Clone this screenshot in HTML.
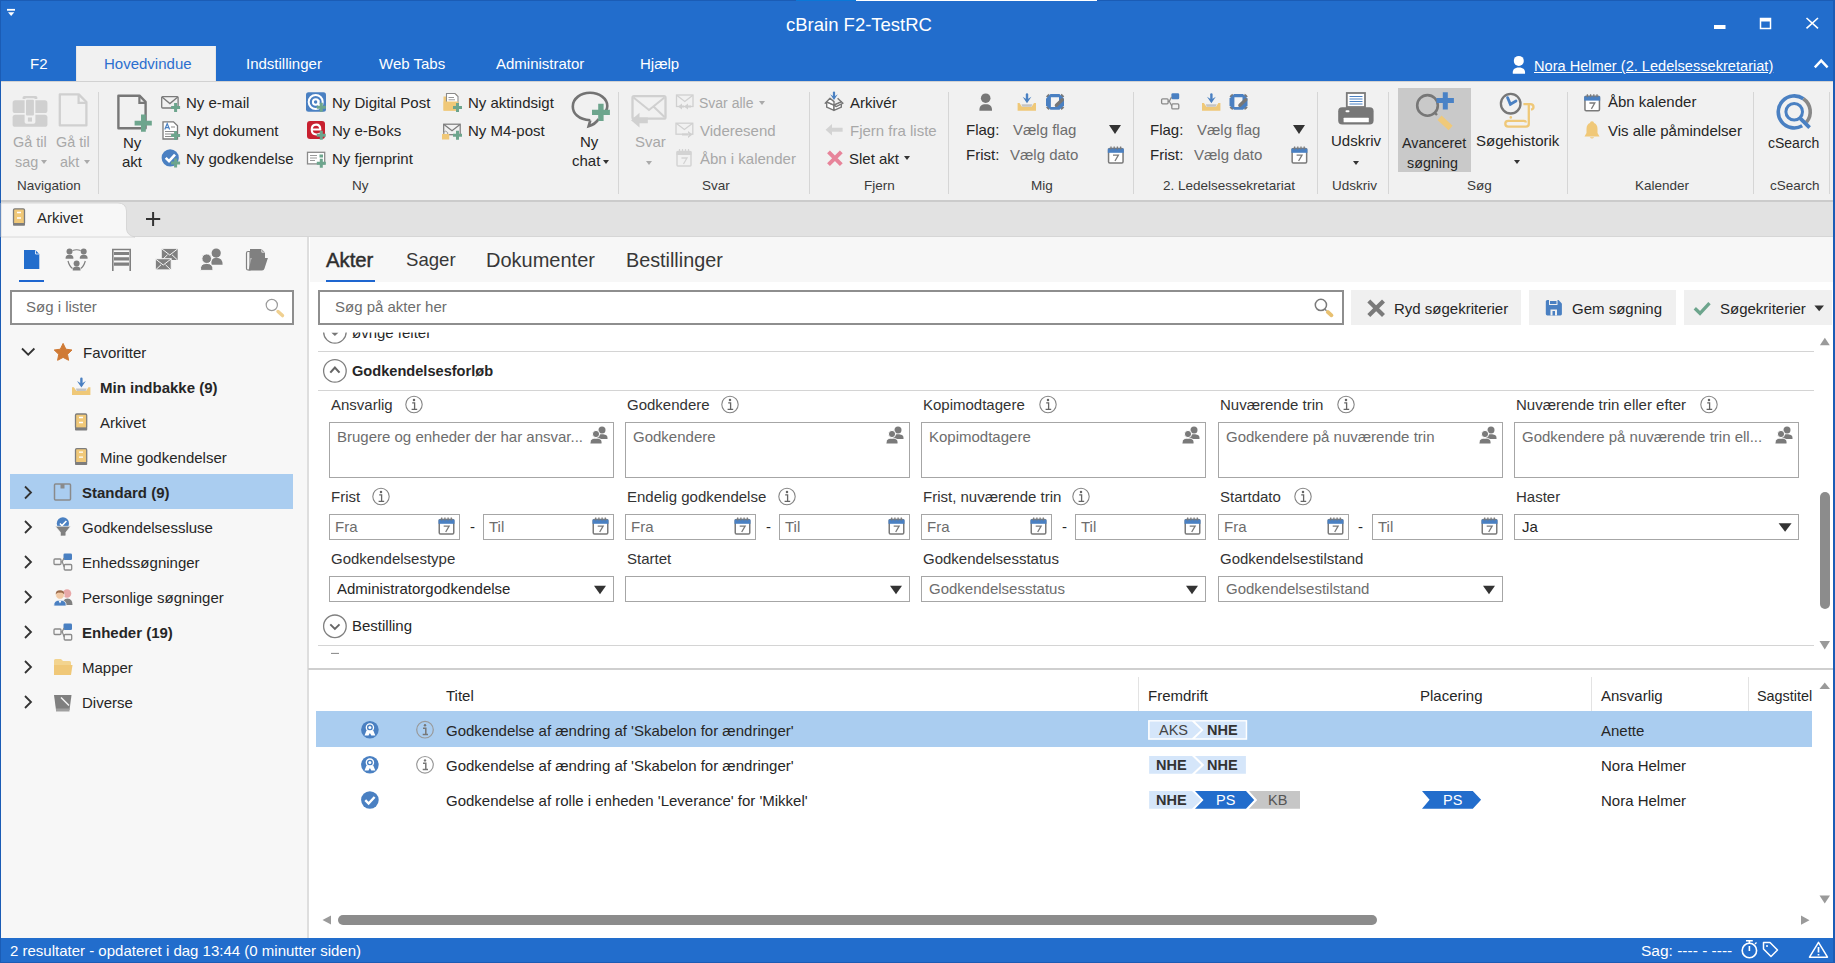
<!DOCTYPE html>
<html><head><meta charset="utf-8">
<style>
*{box-sizing:border-box;margin:0;padding:0}
html,body{width:1835px;height:963px;overflow:hidden;background:#fff}
body{position:relative;font-family:"Liberation Sans",sans-serif;font-size:15px;color:#262626}
.a{position:absolute}
.t{position:absolute;white-space:nowrap;line-height:18px}
.s{font-size:13.5px;line-height:16px;color:#3a3a3a}
svg{position:absolute;overflow:visible}
.w{color:#fff}
.sep{position:absolute;width:1px;background:#d6d6d6;top:92px;height:102px}
.dis{color:#a8a8a8}
.g{color:#6d6d6d}
.box{position:absolute;border:1px solid #a6a6a6;background:#fff}
.lab{position:absolute;white-space:nowrap;line-height:18px;color:#333}
.tri{position:absolute;width:0;height:0;border-left:6px solid transparent;border-right:6px solid transparent;border-top:8px solid #333}
.btri{position:absolute;width:0;height:0;border-left:3.5px solid transparent;border-right:3.5px solid transparent;border-top:4px solid #555}
.row{position:absolute;white-space:nowrap;line-height:18px}
.b{font-weight:bold}
</style></head><body>
<!-- BASE AREAS -->
<div class="a" style="left:0;top:0;width:1835px;height:81px;background:#226dcc"></div>
<div class="a" style="left:0;top:81px;width:1835px;height:119px;background:#f1f1f1;border-top:1px solid #d2d2d2"></div>
<div class="a" style="left:0;top:200px;width:1835px;height:37px;background:#e2e2e2;border-top:2px solid #cbcbcb;border-bottom:1px solid #d6d6d6"></div>
<div class="a" style="left:0;top:237px;width:309px;height:701px;background:#f7f7f7;border-right:2px solid #dedede"></div>
<div class="a" style="left:310px;top:237px;width:1525px;height:45px;background:#f7f7f7"></div>
<div class="a" style="left:0;top:938px;width:1835px;height:25px;background:#226dcc"></div>
<div class="a" style="left:0;top:0;width:1px;height:963px;background:#1b5cb5"></div>
<div class="a" style="left:1833px;top:0;width:2px;height:963px;background:#1b5cb5"></div>
<div class="a" style="left:0;top:962px;width:1835px;height:1px;background:#1b5cb5"></div>
<div class="a" style="left:0;top:0;width:1835px;height:1px;background:#1b5cb5"></div>

<!-- TITLE BAR -->
<div class="t w" style="left:786px;top:14px;font-size:18.5px;line-height:22px">cBrain F2-TestRC</div>
<div class="a" style="left:796px;top:0;width:60px;height:1px;background:#0a78d7"></div>
<div class="a" style="left:856px;top:0;width:241px;height:1px;background:#fff"></div>

<!-- RIBBON TABS -->
<div class="a" style="left:76px;top:46px;width:140px;height:35px;background:#f1f1f1;border-left:1px solid #e6e6e6;border-right:1px solid #e6e6e6"></div>
<div class="t w" style="left:30px;top:55px">F2</div>
<div class="t" style="left:104px;top:55px;color:#2b6fcf">Hovedvindue</div>
<div class="t w" style="left:246px;top:55px">Indstillinger</div>
<div class="t w" style="left:379px;top:55px">Web Tabs</div>
<div class="t w" style="left:496px;top:55px">Administrator</div>
<div class="t w" style="left:640px;top:55px">Hjælp</div>
<div class="t w" style="left:1534px;top:57px;font-size:14.6px;text-decoration:underline">Nora Helmer (2. Ledelsessekretariat)</div>

<!-- RIBBON CONTENT -->
<div class="sep" style="left:98px"></div>
<div class="sep" style="left:618px"></div>
<div class="sep" style="left:809px"></div>
<div class="sep" style="left:948px"></div>
<div class="sep" style="left:1133px"></div>
<div class="sep" style="left:1317px"></div>
<div class="sep" style="left:1388px"></div>
<div class="sep" style="left:1567px"></div>
<div class="sep" style="left:1753px"></div>
<div class="sep" style="left:1829px"></div>

<div class="t s" style="left:17px;top:178px">Navigation</div>
<div class="t s" style="left:352px;top:178px">Ny</div>
<div class="t s" style="left:702px;top:178px">Svar</div>
<div class="t s" style="left:864px;top:178px">Fjern</div>
<div class="t s" style="left:1031px;top:178px">Mig</div>
<div class="t s" style="left:1163px;top:178px">2. Ledelsessekretariat</div>
<div class="t s" style="left:1332px;top:178px">Udskriv</div>
<div class="t s" style="left:1467px;top:178px">Søg</div>
<div class="t s" style="left:1635px;top:178px">Kalender</div>
<div class="t s" style="left:1770px;top:178px">cSearch</div>

<!-- Navigation group -->
<div class="t dis" style="left:13px;top:133px;font-size:14.4px">Gå til</div>
<div class="t dis" style="left:15px;top:153px;font-size:14.4px">sag</div>
<div class="btri" style="left:41px;top:160px;border-top-color:#aaa"></div>
<div class="t dis" style="left:56px;top:133px;font-size:14.4px">Gå til</div>
<div class="t dis" style="left:60px;top:153px;font-size:14.4px">akt</div>
<div class="btri" style="left:84px;top:160px;border-top-color:#aaa"></div>

<!-- Ny group -->
<div class="t" style="left:123px;top:134px">Ny</div>
<div class="t" style="left:122px;top:153px">akt</div>
<div class="t" style="left:186px;top:94px">Ny e-mail</div>
<div class="t" style="left:186px;top:122px">Nyt dokument</div>
<div class="t" style="left:186px;top:150px">Ny godkendelse</div>
<div class="t" style="left:332px;top:94px">Ny Digital Post</div>
<div class="t" style="left:332px;top:122px">Ny e-Boks</div>
<div class="t" style="left:332px;top:150px">Ny fjernprint</div>
<div class="t" style="left:468px;top:94px">Ny aktindsigt</div>
<div class="t" style="left:468px;top:122px">Ny M4-post</div>
<div class="t" style="left:580px;top:133px">Ny</div>
<div class="t" style="left:572px;top:152px">chat</div>
<div class="btri" style="left:603px;top:160px;border-top-color:#333"></div>

<!-- Svar group -->
<div class="t dis" style="left:635px;top:133px">Svar</div>
<div class="btri" style="left:646px;top:161px;border-top-color:#aaa"></div>
<div class="t dis" style="left:699px;top:94px;font-size:14px">Svar alle</div>
<div class="btri" style="left:759px;top:101px;border-top-color:#aaa"></div>
<div class="t dis" style="left:700px;top:122px">Videresend</div>
<div class="t dis" style="left:700px;top:150px">Åbn i kalender</div>

<!-- Fjern group -->
<div class="t" style="left:850px;top:94px">Arkivér</div>
<div class="t dis" style="left:850px;top:122px">Fjern fra liste</div>
<div class="t" style="left:849px;top:150px">Slet akt</div>
<div class="btri" style="left:904px;top:156px;border-top-color:#333"></div>

<!-- Mig group -->
<div class="t" style="left:966px;top:121px">Flag:</div>
<div class="t g" style="left:1013px;top:121px">Vælg flag</div>
<div class="tri" style="left:1109px;top:125px;border-left-width:6px;border-right-width:6px;border-top-width:9px"></div>
<div class="t" style="left:966px;top:146px">Frist:</div>
<div class="t g" style="left:1010px;top:146px">Vælg dato</div>

<div class="t" style="left:1150px;top:121px">Flag:</div>
<div class="t g" style="left:1197px;top:121px">Vælg flag</div>
<div class="tri" style="left:1293px;top:125px;border-top-width:9px"></div>
<div class="t" style="left:1150px;top:146px">Frist:</div>
<div class="t g" style="left:1194px;top:146px">Vælg dato</div>

<!-- Udskriv -->
<div class="t" style="left:1331px;top:132px">Udskriv</div>
<div class="btri" style="left:1353px;top:161px;border-top-color:#333"></div>

<!-- Søg -->
<div class="a" style="left:1398px;top:88px;width:73px;height:84px;background:#c9c9c9"></div>
<div class="t" style="left:1402px;top:134px;font-size:14.3px">Avanceret</div>
<div class="t" style="left:1407px;top:154px;font-size:14.3px">søgning</div>
<div class="t" style="left:1476px;top:132px">Søgehistorik</div>
<div class="btri" style="left:1514px;top:160px;border-top-color:#333"></div>

<!-- Kalender -->
<div class="t" style="left:1608px;top:93px">Åbn kalender</div>
<div class="t" style="left:1608px;top:122px">Vis alle påmindelser</div>

<!-- cSearch -->
<div class="t" style="left:1768px;top:134px;font-size:14px">cSearch</div>

<!-- TAB STRIP -->
<svg width="140" height="40" style="left:0;top:200px"><path d="M1 37V3H118Q126 3 126.5 11V29Q127 35.5 135 37Z" fill="#f7f7f7" stroke="#d0d0d0" stroke-width="0.8"/></svg>
<div class="t" style="left:37px;top:209px">Arkivet</div>

<!-- LEFT PANEL -->
<div class="a" style="left:19px;top:280px;width:25px;height:2px;background:#1e66d0"></div>
<div class="box" style="left:10px;top:290px;width:284px;height:35px;border:2px solid #8e8e8e"></div>
<div class="t g" style="left:26px;top:298px">Søg i lister</div>
<div class="t" style="left:83px;top:344px">Favoritter</div>
<div class="t b" style="left:100px;top:379px">Min indbakke (9)</div>
<div class="t" style="left:100px;top:414px">Arkivet</div>
<div class="t" style="left:100px;top:449px">Mine godkendelser</div>
<div class="a" style="left:10px;top:474px;width:283px;height:35px;background:#aacdf0"></div>
<div class="t b" style="left:82px;top:484px">Standard (9)</div>
<div class="t" style="left:82px;top:519px">Godkendelsessluse</div>
<div class="t" style="left:82px;top:554px">Enhedssøgninger</div>
<div class="t" style="left:82px;top:589px">Personlige søgninger</div>
<div class="t b" style="left:82px;top:624px">Enheder (19)</div>
<div class="t" style="left:82px;top:659px">Mapper</div>
<div class="t" style="left:82px;top:694px">Diverse</div>

<!-- MAIN TABS -->
<div class="t" style="left:326px;top:248px;font-size:20.3px;line-height:24px;color:#2e2e2e;-webkit-text-stroke:0.45px #2e2e2e">Akter</div>
<div class="t" style="left:406px;top:248px;font-size:18.6px;line-height:24px;color:#383838">Sager</div>
<div class="t" style="left:486px;top:248px;font-size:20px;line-height:24px;color:#383838">Dokumenter</div>
<div class="t" style="left:626px;top:248px;font-size:19.8px;line-height:24px;color:#383838">Bestillinger</div>
<div class="a" style="left:326px;top:280px;width:49px;height:2px;background:#1e66d0"></div>

<!-- SEARCH ROW -->
<div class="box" style="left:318px;top:290px;width:1026px;height:35px;border:2px solid #8e8e8e"></div>
<div class="t g" style="left:335px;top:298px">Søg på akter her</div>
<div class="a" style="left:1351px;top:290px;width:170px;height:35px;background:#f0f0f0"></div>
<div class="t" style="left:1394px;top:300px">Ryd søgekriterier</div>
<div class="a" style="left:1529px;top:290px;width:147px;height:35px;background:#f0f0f0"></div>
<div class="t" style="left:1572px;top:300px">Gem søgning</div>
<div class="a" style="left:1684px;top:290px;width:148px;height:35px;background:#f0f0f0"></div>
<div class="t" style="left:1720px;top:300px">Søgekriterier</div>


<!-- FORM AREA -->
<div class="a" style="left:318px;top:325px;width:1496px;height:1px;background:#fff"></div>
<div class="a" style="left:318px;top:351px;width:1496px;height:1px;background:#d4d4d4"></div>
<div class="a" style="left:318px;top:390px;width:1496px;height:1px;background:#d4d4d4"></div>
<div class="t b" style="left:352px;top:362px;font-size:14.6px">Godkendelsesforløb</div>

<div class="lab" style="left:331px;top:396px">Ansvarlig</div>
<div class="lab" style="left:627px;top:396px">Godkendere</div>
<div class="lab" style="left:923px;top:396px">Kopimodtagere</div>
<div class="lab" style="left:1220px;top:396px">Nuværende trin</div>
<div class="lab" style="left:1516px;top:396px">Nuværende trin eller efter</div>

<div class="box" style="left:329px;top:422px;width:285px;height:56px"></div>
<div class="box" style="left:625px;top:422px;width:285px;height:56px"></div>
<div class="box" style="left:921px;top:422px;width:285px;height:56px"></div>
<div class="box" style="left:1218px;top:422px;width:285px;height:56px"></div>
<div class="box" style="left:1514px;top:422px;width:285px;height:56px"></div>
<div class="t g" style="left:337px;top:428px">Brugere og enheder der har ansvar...</div>
<div class="t g" style="left:633px;top:428px">Godkendere</div>
<div class="t g" style="left:929px;top:428px">Kopimodtagere</div>
<div class="t g" style="left:1226px;top:428px">Godkendere på nuværende trin</div>
<div class="t g" style="left:1522px;top:428px">Godkendere på nuværende trin ell...</div>

<div class="lab" style="left:331px;top:488px">Frist</div>
<div class="lab" style="left:627px;top:488px">Endelig godkendelse</div>
<div class="lab" style="left:923px;top:488px">Frist, nuværende trin</div>
<div class="lab" style="left:1220px;top:488px">Startdato</div>
<div class="lab" style="left:1516px;top:488px">Haster</div>

<div class="box" style="left:329px;top:514px;width:131px;height:26px"></div>
<div class="box" style="left:483px;top:514px;width:131px;height:26px"></div>
<div class="box" style="left:625px;top:514px;width:131px;height:26px"></div>
<div class="box" style="left:779px;top:514px;width:131px;height:26px"></div>
<div class="box" style="left:921px;top:514px;width:131px;height:26px"></div>
<div class="box" style="left:1075px;top:514px;width:131px;height:26px"></div>
<div class="box" style="left:1218px;top:514px;width:131px;height:26px"></div>
<div class="box" style="left:1372px;top:514px;width:131px;height:26px"></div>
<div class="box" style="left:1514px;top:514px;width:285px;height:26px"></div>
<div class="t g" style="left:335px;top:518px">Fra</div>
<div class="t g" style="left:489px;top:518px">Til</div>
<div class="t g" style="left:631px;top:518px">Fra</div>
<div class="t g" style="left:785px;top:518px">Til</div>
<div class="t g" style="left:927px;top:518px">Fra</div>
<div class="t g" style="left:1081px;top:518px">Til</div>
<div class="t g" style="left:1224px;top:518px">Fra</div>
<div class="t g" style="left:1378px;top:518px">Til</div>
<div class="t" style="left:1522px;top:518px">Ja</div>
<div class="t" style="left:470px;top:518px">-</div>
<div class="t" style="left:766px;top:518px">-</div>
<div class="t" style="left:1062px;top:518px">-</div>
<div class="t" style="left:1358px;top:518px">-</div>

<div class="lab" style="left:331px;top:550px">Godkendelsestype</div>
<div class="lab" style="left:627px;top:550px">Startet</div>
<div class="lab" style="left:923px;top:550px">Godkendelsesstatus</div>
<div class="lab" style="left:1220px;top:550px">Godkendelsestilstand</div>
<div class="box" style="left:329px;top:576px;width:285px;height:26px"></div>
<div class="box" style="left:625px;top:576px;width:285px;height:26px"></div>
<div class="box" style="left:921px;top:576px;width:285px;height:26px"></div>
<div class="box" style="left:1218px;top:576px;width:285px;height:26px"></div>
<div class="t" style="left:337px;top:580px">Administratorgodkendelse</div>
<div class="t g" style="left:929px;top:580px">Godkendelsesstatus</div>
<div class="t g" style="left:1226px;top:580px">Godkendelsestilstand</div>

<div class="t" style="left:352px;top:617px">Bestilling</div>
<div class="a" style="left:318px;top:645px;width:1496px;height:1px;background:#d4d4d4"></div>
<div class="a" style="left:308px;top:668px;width:1525px;height:2px;background:#cfcfcf"></div>

<!-- LIST AREA -->
<div class="t" style="left:446px;top:687px">Titel</div>
<div class="t" style="left:1148px;top:687px">Fremdrift</div>
<div class="t" style="left:1420px;top:687px">Placering</div>
<div class="t" style="left:1601px;top:687px">Ansvarlig</div>
<div class="t" style="left:1757px;top:687px;width:55px;overflow:hidden;font-size:14.4px">Sagstitel</div>
<div class="a" style="left:1138px;top:677px;width:1px;height:34px;background:#e3e3e3"></div>
<div class="a" style="left:1591px;top:677px;width:1px;height:34px;background:#e3e3e3"></div>
<div class="a" style="left:1748px;top:677px;width:1px;height:34px;background:#e3e3e3"></div>

<div class="a" style="left:316px;top:711px;width:1496px;height:36px;background:#aacdf0"></div>
<div class="t" style="left:446px;top:722px">Godkendelse af ændring af 'Skabelon for ændringer'</div>
<div class="t" style="left:446px;top:757px">Godkendelse af ændring af 'Skabelon for ændringer'</div>
<div class="t" style="left:446px;top:792px">Godkendelse af rolle i enheden 'Leverance' for 'Mikkel'</div>
<div class="t" style="left:1601px;top:722px">Anette</div>
<div class="t" style="left:1601px;top:757px">Nora Helmer</div>
<div class="t" style="left:1601px;top:792px">Nora Helmer</div>

<!-- scrollbars -->
<div class="a" style="left:1820px;top:492px;width:10px;height:117px;background:#8c8c8c;border-radius:5px"></div>
<div class="a" style="left:338px;top:915px;width:1039px;height:10px;background:#8c8c8c;border-radius:5px"></div>


<!-- STATUS -->
<div class="t w" style="left:10px;top:942px">2 resultater - opdateret i dag 13:44 (0 minutter siden)</div>
<div class="t w" style="left:1641px;top:942px;font-size:15.5px">Sag: ---- - ----</div>


<!-- ICONS OVERLAY -->
<svg width="1835" height="963" style="left:0;top:0;pointer-events:none">
<defs>
 <symbol id="pl" overflow="visible"><path d="M-4.5 0H4.5M0 -4.5V4.5" stroke="#6da58d" stroke-width="3"/></symbol>
 <symbol id="cal" overflow="visible">
  <rect x="0.75" y="2.5" width="14.5" height="14.5" rx="1.2" fill="#fff" stroke="#7a7a7a" stroke-width="1.5"/>
  <rect x="0" y="2.6" width="16" height="4.2" fill="#4a80c2"/>
  <path d="M3.2 0.5V3.5M6.4 0.5V3.5M9.6 0.5V3.5M12.8 0.5V3.5" stroke="#7a7a7a" stroke-width="1.3"/>
  <path d="M5.2 9.2H10.6L7.2 15" stroke="#7a7a7a" stroke-width="1.3" fill="none"/>
 </symbol>
 <symbol id="info" overflow="visible">
  <circle cx="0" cy="0" r="8.2" fill="none" stroke="#858585" stroke-width="1.1"/>
  <circle cx="0" cy="-4.4" r="1.25" fill="#666"/>
  <path d="M-1.8 -1.6H0.6V4.7M-2.4 4.9H3.2" stroke="#666" stroke-width="1.3" fill="none"/>
 </symbol>
 <symbol id="ppl" overflow="visible">
  <circle cx="12" cy="4" r="3.5" fill="#7a7a7a"/>
  <path d="M6.5 13C6.5 9 9 8.3 12 8.3S17.5 9 17.5 12V13Z" fill="#7a7a7a"/>
  <circle cx="6" cy="8" r="3.6" fill="#7a7a7a" stroke="#fff" stroke-width="1"/>
  <path d="M0 17.5C0 13 2.5 12.2 6 12.2S12 13 12 16.5V18H0Z" fill="#7a7a7a" stroke="#fff" stroke-width="1"/>
 </symbol>
</defs>

<!-- title bar -->
<path d="M7 9.8H15" stroke="#fff" stroke-width="1.8"/>
<path d="M8 12.2H14.3L11.15 15.9Z" fill="#fff"/>
<rect x="1714" y="25" width="11.5" height="4" fill="#fff"/>
<rect x="1760.5" y="18.5" width="10" height="10" fill="none" stroke="#fff" stroke-width="1.5"/>
<rect x="1760" y="18" width="11" height="3.5" fill="#fff"/>
<path d="M1806.5 18L1818 28.3M1818 18L1806.5 28.3" stroke="#fff" stroke-width="1.6"/>
<path d="M1814.8 67.3L1821.2 60.6L1827.6 67.3" stroke="#fff" stroke-width="2.4" fill="none"/>
<circle cx="1518.8" cy="60.9" r="5" fill="#fff"/>
<path d="M1512.8 73.7C1512.3 69.5 1514.5 67.4 1518.9 67.4S1525.5 69.5 1525 73.7Z" fill="#fff"/>

<!-- Navigation -->
<path d="M22.6 99V97.5Q22.6 96 24.2 96H35.8Q37.3 96 37.3 97.5V99Z" fill="#d0d0d0"/>
<rect x="12.6" y="100.3" width="34.8" height="12.8" rx="2.6" fill="#d0d0d0"/>
<rect x="12.6" y="114.7" width="34.8" height="12.1" rx="2.6" fill="#d0d0d0"/>
<rect x="24.6" y="98.3" width="10.8" height="25.4" rx="1.8" fill="#f1f1f1"/>
<rect x="26" y="99.8" width="7.9" height="15.8" rx="1" fill="#d0d0d0"/>
<rect x="27.9" y="117.5" width="4.1" height="4.1" fill="#d0d0d0"/>
<path d="M59.8 94.4H78.8L86.4 102V125.4H59.8Z" fill="none" stroke="#d0d0d0" stroke-width="2.3" stroke-linejoin="round"/>
<path d="M78.6 94.4V102.8H86.4" fill="none" stroke="#d0d0d0" stroke-width="2.2"/>

<!-- Ny akt -->
<path d="M118.4 95.7H139.5L145.6 101.8V128.2H118.4Z" fill="none" stroke="#777" stroke-width="2.4" stroke-linejoin="round"/>
<path d="M139.4 95.7V102.9H145.6" fill="none" stroke="#777" stroke-width="2.2"/>
<path d="M134.6 123.2H151.8M143.4 114.6V131.8" stroke="#6da58d" stroke-width="4.8"/>

<!-- Ny e-mail -->
<rect x="161.7" y="96.6" width="16.4" height="11.4" rx="1" fill="none" stroke="#7a7a7a" stroke-width="1.3"/>
<path d="M162 97L169.9 103.6L177.8 97" fill="none" stroke="#7a7a7a" stroke-width="1.3"/>
<use href="#pl" x="175.6" y="107.6"/>
<!-- Nyt dokument -->
<path d="M163 121.8H173.5L177.5 125.8V139H163Z" fill="#fff" stroke="#7a7a7a" stroke-width="1.3"/>
<path d="M164.8 129.5L167.2 123.5L169.6 129.5M165.7 127.6H168.7" stroke="#4a80c2" stroke-width="1.2" fill="none"/>
<path d="M171 127H175M165 131.5H175M165 134H175M165 136.5H172" stroke="#8a8a8a" stroke-width="1.2"/>
<use href="#pl" x="175.6" y="135.4"/>
<!-- Ny godkendelse -->
<circle cx="170.2" cy="157.9" r="8.6" fill="#4a80c2"/>
<path d="M165.7 157.9L169 161.2L175 154.6" stroke="#fff" stroke-width="2.6" fill="none"/>
<use href="#pl" x="175.6" y="163"/>

<!-- Ny Digital Post -->
<rect x="306" y="92.2" width="20" height="19.5" rx="2.5" fill="#4a80c2"/>
<circle cx="315.7" cy="102" r="7" fill="none" stroke="#fff" stroke-width="2"/>
<circle cx="315.7" cy="102" r="2.8" fill="none" stroke="#fff" stroke-width="2"/>
<path d="M318.5 100V104Q318.5 106 321 105" fill="none" stroke="#fff" stroke-width="2"/>
<use href="#pl" x="321.3" y="107.3"/>
<!-- e-Boks -->
<rect x="307" y="121" width="18" height="18" rx="3" fill="#c8202f"/>
<path d="M312 129.5H320.3Q320.3 124.6 316.1 124.6Q311.7 124.6 311.7 129.6Q311.7 134.5 316.3 134.5Q318.7 134.5 320 133.4" fill="none" stroke="#fff" stroke-width="2.1"/>
<use href="#pl" x="321.3" y="135.2"/>
<!-- fjernprint -->
<rect x="307.5" y="152.3" width="17.2" height="11.6" fill="#fff" stroke="#8a8a8a" stroke-width="1.3"/>
<path d="M310 155.5H317M310 158H317M310 160.5H315" stroke="#9a9a9a" stroke-width="1.2"/>
<rect x="319.5" y="154.5" width="3.5" height="3" fill="#6da58d"/>
<use href="#pl" x="321.3" y="163.3"/>
<!-- aktindsigt -->
<path d="M443.5 96.5H448V94H457V110.5H443.5Z" fill="#f0c878"/>
<path d="M446.5 93.5H455L458 96.5V106H446.5Z" fill="#fff" stroke="#8a8a8a" stroke-width="1.1"/>
<path d="M448.5 97.5H454M448.5 99.8H455" stroke="#999" stroke-width="1"/>
<path d="M443.5 101.5H458.5V110.7H443.5Z" fill="#f0c878"/>
<use href="#pl" x="457.5" y="107.5"/>
<!-- M4 -->
<rect x="443.7" y="124.2" width="16.5" height="10.5" fill="none" stroke="#7a7a7a" stroke-width="1.2"/>
<path d="M444 124.5L452 130.8L460 124.5" fill="none" stroke="#7a7a7a" stroke-width="1.2"/>
<rect x="442" y="134" width="7.2" height="5.5" fill="#f0c878"/>
<path d="M443.5 134V132.5Q445.6 129.8 447.7 132.5V134" fill="none" stroke="#9a9a9a" stroke-width="1"/>
<use href="#pl" x="457.5" y="135.3"/>
<!-- Ny chat -->
<path d="M590.3 120.3C578 119.5 572.8 113 572.8 106.4C572.8 98.5 580.8 92.8 590 92.8C599.5 92.8 607.3 98.5 607.3 106C607.3 108 606.8 109.5 606 110.8M590.3 120.3L588.6 126.3C593 125 596.5 122.5 598.6 119" fill="none" stroke="#737373" stroke-width="2.6"/>
<path d="M592 112.4H609.9M600.9 103.7V121" stroke="#6da58d" stroke-width="5.4"/>

<!-- Svar -->
<rect x="632.5" y="96.2" width="33" height="22.5" rx="1.5" fill="none" stroke="#d0d0d0" stroke-width="2.3"/>
<path d="M633.5 97.5L649 110L664.5 97.5M654 107L664.5 117" fill="none" stroke="#d0d0d0" stroke-width="2"/>
<path d="M631 120.3L639.5 112.8V117.5H647.8V123.2H639.5V127.5Z" fill="#d0d0d0"/>
<!-- Svar alle -->
<rect x="676.5" y="95" width="16.5" height="11.5" fill="none" stroke="#d0d0d0" stroke-width="1.3"/>
<path d="M677 95.5L684.8 101.5L692.5 95.5" fill="none" stroke="#d0d0d0" stroke-width="1.3"/>
<path d="M678 106.5L682 103.5V109.5ZM684 106.5L688 103.5V109.5Z" fill="#d0d0d0"/>
<path d="M681 106.5H684M687 106.5H691" stroke="#d0d0d0" stroke-width="2"/>
<!-- Videresend -->
<rect x="676" y="123.2" width="16.8" height="11" fill="none" stroke="#d0d0d0" stroke-width="1.3"/>
<path d="M676.5 123.6L684.4 129.5L692.3 123.6" fill="none" stroke="#d0d0d0" stroke-width="1.3"/>
<path d="M692.5 134.5L688 131V138ZM682 133.4H689V135.6H682Z" fill="#d0d0d0"/>
<!-- Åbn i kalender disabled -->
<g opacity="1">
 <rect x="677" y="151.5" width="14" height="14.5" rx="1" fill="none" stroke="#d3d3d3" stroke-width="1.5"/>
 <rect x="676.5" y="151.5" width="15" height="3.5" fill="#d3d3d3"/>
 <path d="M679.5 149V152M682.5 149V152M685.5 149V152M688.5 149V152" stroke="#d3d3d3" stroke-width="1.2"/>
 <path d="M681.5 158H687L683.5 164" stroke="#d3d3d3" stroke-width="1.3" fill="none"/>
</g>

<!-- Arkivér -->
<g fill="#fff" stroke="#777" stroke-width="1.4" stroke-linejoin="round">
 <path d="M826.7 101.8L834 105.2V110.4L826.7 107.2Z"/>
 <path d="M834 105.2L841.3 101.8V107.2L834 110.4Z"/>
 <path d="M826.7 101.8L825.2 103.2L830 98.2L834 101.6V105.2Z"/>
 <path d="M834 105.2L836.2 106.6L843 103.2L841.3 101.8Z"/>
 <path d="M837.6 98.2L841.3 101.8"/>
</g>
<path d="M834 92.6V96.5" stroke="#4a80c2" stroke-width="2.2" stroke-linecap="round"/>
<path d="M830.2 94.3L834 96.8L837.8 94.3L834 100Z" fill="#4a80c2"/>
<!-- Fjern fra liste -->
<path d="M825.6 129.8L832 124V127.8H842.6V131.8H832V135.6Z" fill="#d3d3d3"/>
<!-- Slet -->
<path d="M828.5 151.8L841.3 164.6M841.3 151.8L828.5 164.6" stroke="#e7849a" stroke-width="4"/>

<!-- Mig -->
<circle cx="985.7" cy="98.2" r="4.8" fill="#777"/>
<path d="M979.4 110.7C979.2 106 981.5 104.3 985.7 104.3S992.2 106 992 110.7Z" fill="#777"/>
<g id="inbox1">
 <path d="M1017.6 103H1019.5L1022 106.8H1031.6L1034 103H1036V110.7H1017.6Z" fill="#efc878"/>
 <path d="M1021.5 104.2H1032.3L1031.3 106.8H1022.3Z" fill="#c4c4c4"/>
 <path d="M1027 94.5V100" stroke="#4a80c2" stroke-width="2.4" stroke-linecap="round"/>
 <path d="M1022.6 96.8L1027 99.6L1031.4 96.8L1027 103.2Z" fill="#4a80c2"/>
</g>
<g id="edit1">
 <path d="M1047.3 97.2A3.8 3.8 0 0 1 1049.5 95M1060.8 95A3.8 3.8 0 0 1 1063 97.2M1063 106.6A3.8 3.8 0 0 1 1060.8 108.8M1049.5 108.8A3.8 3.8 0 0 1 1047.3 106.6" stroke="#7a7a7a" stroke-width="2.8" fill="none"/>
 <path d="M1050.5 94H1059.5L1064 98.5V105.2L1059.5 109.7H1050.5L1046 105.2V98.5Z" fill="#4a80c2"/>
 <path d="M1050.9 97.2H1059V101.5L1055 107H1050.9Z" fill="#f4f4f4"/>
 <path d="M1056.4 105.3L1062.3 99.8" stroke="#777" stroke-width="3.4" stroke-linecap="round"/>
</g>
<use href="#cal" x="1107.8" y="146"/>

<!-- Ledelsessekretariat -->
<rect x="1171.4" y="93.2" width="7.8" height="6.1" rx="1.3" fill="#4a80c2"/>
<rect x="1161.6" y="98.8" width="6.5" height="5" rx="1" fill="none" stroke="#8a8a8a" stroke-width="1.3"/>
<rect x="1171.8" y="103.9" width="7" height="5" rx="1" fill="none" stroke="#8a8a8a" stroke-width="1.3"/>
<path d="M1168 101.3H1169.3L1171.5 97M1169.3 101.3L1171.8 106" stroke="#8a8a8a" stroke-width="1.2" fill="none"/>
<use href="#inbox1" x="184.4" y="0"/>
<use href="#edit1" x="183.5" y="0"/>
<use href="#cal" x="1291.4" y="146"/>

<!-- Udskriv -->
<rect x="1346.8" y="93" width="18.2" height="14" fill="#fff" stroke="#7a7a7a" stroke-width="1.8"/>
<path d="M1349.5 96.5H1362.5M1349.5 99H1362.5M1349.5 101.5H1362.5M1349.5 104H1362.5" stroke="#4a80c2" stroke-width="1"/>
<rect x="1338.2" y="107.2" width="35.4" height="17.4" rx="4" fill="#777"/>
<rect x="1343.6" y="117.8" width="25.2" height="4.4" rx="0.5" fill="#fff"/>
<rect x="1345.5" y="110.3" width="4" height="2" rx="1" fill="#fff"/>

<!-- Avanceret søgning -->
<circle cx="1427.5" cy="105.4" r="10.3" fill="none" stroke="#777" stroke-width="2.6"/>
<path d="M1435 113L1437 115" stroke="#777" stroke-width="2.4"/>
<path d="M1439.5 117.8L1450.6 128" stroke="#efc97a" stroke-width="6"/>
<path d="M1436.5 100.6H1453.9M1445.3 92.2V109.6" stroke="#4a82c6" stroke-width="5"/>

<!-- Søgehistorik -->
<path d="M1523.4 104.2H1530.3Q1533.5 104.2 1533.5 107Q1533.5 109.2 1531 109.6M1528.8 104.4V124Q1528.8 126.6 1526 126.6H1508.2Q1505.3 126.6 1505.3 123.7Q1505.3 120.8 1508.2 120.8H1524Q1525.8 120.8 1525.8 122.6" fill="none" stroke="#efc878" stroke-width="2.3"/>
<circle cx="1510.8" cy="117.4" r="1.3" fill="#efc878"/>
<circle cx="1510.7" cy="103.7" r="9.8" fill="none" stroke="#777" stroke-width="2.3"/>
<path d="M1507.6 97.6L1510.4 104.2L1516 101" stroke="#4a80c2" stroke-width="2.8" fill="none" stroke-linecap="round"/>
<circle cx="1510.6" cy="103.8" r="1.8" fill="#4a80c2"/>

<!-- Kalender -->
<use href="#cal" x="1584.2" y="93.8"/>
<path d="M1592 121.3Q1594 121.3 1594 123Q1597.5 124.3 1597.5 129V133L1599.5 136.5H1584.5L1586.5 133V129Q1586.5 124.3 1590 123Q1590 121.3 1592 121.3Z" fill="#f0c878"/>
<path d="M1589.8 137.2Q1592 139.8 1594.2 137.2Z" fill="#f0c878"/>

<!-- cSearch -->
<path d="M1803.4 98.8A16 16 0 1 0 1802.2 125.8" fill="none" stroke="#4a80c2" stroke-width="3.6"/>
<path d="M1803.4 98.8A16 16 0 0 1 1806.5 122.2" fill="none" stroke="#888" stroke-width="3.6"/>
<circle cx="1794.2" cy="111.7" r="8.3" fill="none" stroke="#4a80c2" stroke-width="3"/>
<path d="M1800.3 118.3L1809.6 127.6" stroke="#4a80c2" stroke-width="3.8"/>

<!-- tab strip -->
<rect x="13.5" y="208.8" width="11" height="15.5" rx="1.3" fill="#f0c878" stroke="#7d7d7d" stroke-width="1.3"/>
<rect x="13" y="223" width="12" height="2.8" rx="0.8" fill="#7d7d7d"/>
<path d="M17 212.5H21M17 218H21" stroke="#fff" stroke-width="1.3"/>
<path d="M146 219H160.2M153.1 212V226" stroke="#333" stroke-width="2"/>

<!-- left panel icon row -->
<path d="M24 250H35.3L39.3 254V269H24Z" fill="#226dcc"/>
<path d="M35.5 250.3V254H39" fill="none" stroke="#fff" stroke-width="0.8"/>
<g fill="#808080">
 <circle cx="69.5" cy="251.5" r="3"/><path d="M65.6 258.8Q65.2 254.8 69.5 254.8T73.4 258.8Z"/>
 <circle cx="83.7" cy="251.5" r="3"/><path d="M79.8 258.8Q79.4 254.8 83.7 254.8T87.6 258.8Z"/>
 <circle cx="76.6" cy="263.5" r="3"/><path d="M72.7 270.5Q72.3 266.6 76.6 266.6T80.5 270.5Z"/>
</g>
<path d="M72.5 250.5Q76.6 249 80.7 250.5M68 261Q69.5 266.5 72.5 268.5M85.3 261Q83.8 266.5 80.7 268.5" fill="none" stroke="#808080" stroke-width="1.2"/>
<path d="M112.8 270.9V249.5H130.2V270.9" fill="none" stroke="#808080" stroke-width="1.6"/>
<path d="M114 253.5H129M114 258.8H129M114 264.2H129" stroke="#808080" stroke-width="3.2"/>
<g>
 <rect x="161.8" y="248.9" width="15.9" height="11.1" fill="#808080"/>
 <path d="M162 249L169.75 255L177.5 249M162 260L167.5 254.8M177.5 260L172 254.8" stroke="#f7f7f7" stroke-width="1" fill="none"/>
 <rect x="155.3" y="258.7" width="15.9" height="11.2" fill="#808080" stroke="#f7f7f7" stroke-width="1"/>
 <path d="M155.5 259L163.25 265L171 259M155.5 270L161 264.8M171 270L165.5 264.8" stroke="#f7f7f7" stroke-width="1" fill="none"/>
</g>
<g fill="#808080">
 <circle cx="216.2" cy="253.1" r="4.6"/>
 <path d="M211.6 264.8Q210.5 258 216.2 257.8Q222.8 258 222.6 264.8Z"/>
 <circle cx="206.7" cy="258.7" r="4.8" stroke="#f7f7f7" stroke-width="1"/>
 <path d="M200.6 270.4Q199.5 263.4 206.7 263.4Q213.5 263.4 213 270.4Z" stroke="#f7f7f7" stroke-width="1"/>
</g>
<path d="M246.5 253V268.5Q246.5 270 248 270H250V251.5H248Q246.5 251.5 246.5 253Z" fill="none" stroke="#808080" stroke-width="1.2"/>
<path d="M250 248.9H261.5L265 252.4V258H250Z" fill="#808080"/>
<path d="M251.5 258H267.9L264.5 268.5Q264 270.4 262 270.4H248.5Z" fill="#808080"/>
<path d="M261.8 249.2V252.2H264.7" fill="none" stroke="#f7f7f7" stroke-width="0.8"/>

<!-- left search magnifier -->
<circle cx="271.8" cy="305" r="5.6" fill="none" stroke="#9a9a9a" stroke-width="1.2"/>
<path d="M278 311.5L282.5 315.6" stroke="#f0d090" stroke-width="3.4" stroke-linecap="round"/>

<!-- tree -->
<path d="M22 348.5L28.2 354.7L34.4 348.5" fill="none" stroke="#333" stroke-width="1.8"/>
<path d="M63.1 343.4L65.9 349.2L72 350L67.5 354.3L68.6 360.3L63.1 357.4L57.6 360.3L58.7 354.3L54.2 350L60.3 349.2Z" fill="#d07a35" stroke="#d07a35" stroke-width="1" stroke-linejoin="round"/>
<use href="#inbox1" x="-945.6" y="284.2"/>
<g id="cab">
 <rect x="75.5" y="414" width="11.2" height="14.5" rx="1.3" fill="#f0c878" stroke="#7d7d7d" stroke-width="1.3"/>
 <rect x="75" y="427.5" width="12.2" height="3" rx="0.8" fill="#7d7d7d"/>
 <path d="M79 417.5H83M79 422.5H83" stroke="#fff" stroke-width="1.3"/>
</g>
<use href="#cab" x="0" y="34.6"/>
<g fill="none" stroke="#333" stroke-width="1.8">
 <path d="M25 486.5L31 492.5L25 498.5"/>
 <path d="M25 521L31 527L25 533"/>
 <path d="M25 556L31 562L25 568"/>
 <path d="M25 591L31 597L25 603"/>
 <path d="M25 626L31 632L25 638"/>
 <path d="M25 661L31 667L25 673"/>
 <path d="M25 696L31 702L25 708"/>
</g>
<!-- Standard -->
<rect x="54.5" y="484" width="16" height="16" rx="1" fill="none" stroke="#8a8a8a" stroke-width="1.5"/>
<rect x="60.5" y="484" width="4" height="4.5" fill="#8a8a8a"/>
<!-- Godkendelsessluse -->
<circle cx="62.9" cy="523.4" r="6.1" fill="#4a80c2"/>
<path d="M59.9 523.5L62 525.6L66.4 521" fill="none" stroke="#fff" stroke-width="1.6"/>
<path d="M55.3 526.3H70.7L65.9 532.3V535.2Q65.9 536 65 536H61.3Q60.4 536 60.4 535.2V532.3Z" fill="#808080" stroke="#f7f7f7" stroke-width="0.7"/>
<!-- Enhedssøgninger / Enheder -->
<g id="org2">
 <rect x="63.5" y="553.5" width="8.5" height="6.5" rx="1.3" fill="#4a80c2"/>
 <rect x="54" y="559" width="7" height="5.5" rx="1" fill="none" stroke="#8a8a8a" stroke-width="1.3"/>
 <rect x="64.2" y="564.5" width="7.5" height="5.5" rx="1" fill="none" stroke="#8a8a8a" stroke-width="1.3"/>
 <path d="M61 561.8H62.2L64 558M62.2 561.8L64.2 567" stroke="#8a8a8a" stroke-width="1.2" fill="none"/>
</g>
<use href="#org2" x="0" y="70"/>
<!-- Personlige -->
<g transform="translate(0,1.5)">
<circle cx="67" cy="592" r="4.3" fill="#e8a8a8"/>
<path d="M62.5 603.5Q62.5 597 67.5 597T72.5 603.5Z" fill="#808080"/>
<circle cx="60" cy="593.5" r="4.3" fill="#f1c9a5" stroke="#f7f7f7" stroke-width="0.8"/>
<path d="M55.7 593Q55.5 588.7 60 588.7Q64.5 588.7 64.3 593Q62 590.5 60 591.3Q57.5 590.5 55.7 593Z" fill="#9a6a4a"/>
<path d="M53.8 604.5Q53.5 598.5 60 598.5Q66.5 598.5 66.2 604.5Z" fill="#4a80c2" stroke="#f7f7f7" stroke-width="0.8"/>
<path d="M58.5 599L60 602L61.5 599" fill="#fff"/>
</g>
<!-- Mapper -->
<path d="M54 660.5Q54 659 55.5 659H61L63 661H69.5Q71 661 71 662.5V675H54Z" fill="#f3d48f"/>
<path d="M54 665H72.5L71 675H54Z" fill="#f0c878"/>
<!-- Diverse -->
<g transform="translate(0,1.5)">
<path d="M54 693.5H71.5L69.5 708.5H56Z" fill="#808080"/>
<path d="M56 707H69.5V710H56Z" fill="#a0a0a0"/>
<path d="M61 696L69 704" stroke="#f7f7f7" stroke-width="1.4"/>

</g>
<!-- MAIN: search row -->
<circle cx="1320.9" cy="304.9" r="5.6" fill="none" stroke="#7a7a7a" stroke-width="1.5"/>
<path d="M1325 309.2L1326.5 310.7" stroke="#7a7a7a" stroke-width="1.3"/>
<path d="M1327.8 312L1331.5 315.3" stroke="#e8c070" stroke-width="3.8" stroke-linecap="round"/>
<path d="M1370.3 302.4L1382 314M1382 302.4L1370.3 314" stroke="#7a7a7a" stroke-width="4.2" stroke-linecap="square"/>
<path d="M1545.8 301.5Q1545.8 300 1547.3 300H1558.5L1561.9 303.4V314Q1561.9 315.4 1560.5 315.4H1547.3Q1545.8 315.4 1545.8 314Z" fill="#4a80c2"/>
<rect x="1549" y="300" width="8.5" height="5" fill="#f0f0f0"/>
<rect x="1550" y="301" width="6.5" height="3" fill="#4a80c2"/>
<rect x="1550.5" y="309.5" width="6.5" height="5.9" fill="#f0f0f0"/>
<rect x="1552.5" y="311" width="2.5" height="4.4" fill="#4a80c2"/>
<path d="M1694.8 308.3L1700 313.3L1709.5 303.2" fill="none" stroke="#6da58d" stroke-width="3.3"/>
<path d="M1814.4 305.4H1824L1819.2 311.3Z" fill="#333"/>
<path d="M1819.9 345.3H1829.8L1824.85 337.8Z" fill="#9a9a9a"/>

<!-- form circles -->
<clipPath id="clipo"><rect x="300" y="332.5" width="200" height="20"/></clipPath>
<g clip-path="url(#clipo)"><circle cx="334.9" cy="331.9" r="11.3" fill="none" stroke="#808080" stroke-width="1.3"/>
<path d="M331.2 332.5H338.6L334.9 336Z" fill="#777"/></g>
<circle cx="334.9" cy="370.9" r="11.3" fill="none" stroke="#808080" stroke-width="1.3"/>
<path d="M330.3 372.6L334.9 367.5L339.5 372.6" fill="none" stroke="#666" stroke-width="2.1"/>
<circle cx="334.9" cy="626.3" r="11.3" fill="none" stroke="#808080" stroke-width="1.3"/>
<path d="M330.3 624.3L334.9 629L339.5 624.3" fill="none" stroke="#666" stroke-width="1.9"/>

<!-- info icons -->
<use href="#info" x="414" y="404.5"/>
<use href="#info" x="730" y="404.5"/>
<use href="#info" x="1048" y="404.5"/>
<use href="#info" x="1346" y="404.5"/>
<use href="#info" x="1709" y="404.5"/>
<use href="#info" x="381" y="496.5"/>
<use href="#info" x="787" y="496.5"/>
<use href="#info" x="1081" y="496.5"/>
<use href="#info" x="1303" y="496.5"/>

<!-- people icons -->
<use href="#ppl" x="590" y="426"/>
<use href="#ppl" x="886" y="426"/>
<use href="#ppl" x="1182" y="426"/>
<use href="#ppl" x="1479" y="426"/>
<use href="#ppl" x="1775" y="426"/>

<!-- calendars -->
<use href="#cal" x="438.5" y="517"/>
<use href="#cal" x="592.5" y="517"/>
<use href="#cal" x="734.5" y="517"/>
<use href="#cal" x="888.5" y="517"/>
<use href="#cal" x="1030.5" y="517"/>
<use href="#cal" x="1184.5" y="517"/>
<use href="#cal" x="1327.5" y="517"/>
<use href="#cal" x="1481.5" y="517"/>

<!-- dropdown triangles -->
<g fill="#333">
 <path d="M1778.6 523.2H1791.6L1785.1 531.8Z"/>
 <path d="M594 585.8H606L600 594.2Z"/>
 <path d="M890 585.8H902L896 594.2Z"/>
 <path d="M1186 585.8H1198L1192 594.2Z"/>
 <path d="M1483 585.8H1495L1489 594.2Z"/>
</g>
<!-- form scroll arrows -->
<path d="M1819.5 641H1830L1824.75 649.5Z" fill="#9a9a9a"/>
<path d="M331 653.4H339" stroke="#777" stroke-width="0.9"/>

<!-- list header scroll -->
<path d="M1819.5 689H1830L1824.75 682.6Z" fill="#9a9a9a"/>
<path d="M1819.5 895.5H1830L1824.75 903.5Z" fill="#9a9a9a"/>
<path d="M331 915.5V924.5L322.5 920Z" fill="#9a9a9a"/>
<path d="M1801 915.6V924.7L1809.5 920.15Z" fill="#9a9a9a"/>

<!-- row icons -->
<g id="award">
 <circle cx="369.9" cy="729.7" r="8.8" fill="#4a80c2"/>
 <circle cx="369.9" cy="727.5" r="3.6" fill="none" stroke="#fff" stroke-width="1.3"/>
 <path d="M366.5 730.5L364.5 735.5H368.5L369.9 733L371.3 735.5H375.3L373.3 730.5" fill="#fff"/>
 <circle cx="369.9" cy="727.5" r="1.5" fill="#fff"/>
</g>
<use href="#award" x="0" y="35.1"/>
<circle cx="369.9" cy="800" r="8.8" fill="#4a80c2"/>
<path d="M365.3 800.2L368.6 803.5L374.6 797" fill="none" stroke="#fff" stroke-width="2.4"/>
<g>
 <circle cx="425" cy="729.7" r="8.3" fill="none" stroke="#999" stroke-width="1.2"/>
 <circle cx="425" cy="725.3" r="1.2" fill="#777"/>
 <path d="M423 728.2H425.8V734.3M422.7 734.5H428" stroke="#777" stroke-width="1.5" fill="none"/>
</g>
<g>
 <circle cx="425" cy="764.8" r="8.3" fill="none" stroke="#999" stroke-width="1.2"/>
 <circle cx="425" cy="760.4" r="1.2" fill="#777"/>
 <path d="M423 763.3H425.8V769.4M422.7 769.6H428" stroke="#777" stroke-width="1.5" fill="none"/>
</g>

<!-- badges -->
<rect x="1148.1" y="720.1" width="99.1" height="19.7" fill="#fff"/>
<path d="M1149.6 721.6H1192L1201 730L1192 738.3H1149.6Z" fill="#d5e6fa"/>
<path d="M1195 721.6H1245.7V738.3H1195L1203.5 730Z" fill="#d5e6fa"/>
<path d="M1149.1 756.1H1192L1201.3 765L1192 773.8H1149.1Z" fill="#d5e6fa"/>
<path d="M1195 756.1H1245.9V773.8H1195L1204.3 765Z" fill="#d5e6fa"/>
<path d="M1149.1 791.1H1192L1201.3 800L1192 808.8H1149.1Z" fill="#d5e6fa"/>
<path d="M1195 791.1H1246L1254.2 800L1246 808.8H1195L1203.5 800Z" fill="#226dcc"/>
<path d="M1249 791.1H1300V808.8H1249L1257.2 800Z" fill="#c6c6c6"/>
<path d="M1422 791H1472.8L1481.1 799.85L1472.8 808.7H1422L1429.6 799.85Z" fill="#226dcc"/>

<!-- status icons -->
<circle cx="1749.4" cy="950.5" r="7.2" fill="none" stroke="#fff" stroke-width="1.6"/>
<path d="M1746 940.8H1752.8M1749.4 941V943.3M1749.4 946V951" stroke="#fff" stroke-width="1.6"/>
<path d="M1755 944L1756.5 942.5" stroke="#fff" stroke-width="1.3"/>
<path d="M1763.5 942.5H1770L1777.5 950L1771 956.5L1763.5 949Z" fill="none" stroke="#fff" stroke-width="1.5" stroke-linejoin="round"/>
<circle cx="1767" cy="946" r="1" fill="#fff"/>
<path d="M1818.5 942.3L1827.5 957.2H1809.5Z" fill="none" stroke="#fff" stroke-width="1.5" stroke-linejoin="round"/>
<path d="M1818.5 947V952.5M1818.5 954V955.5" stroke="#fff" stroke-width="1.7"/>

</svg>
<div class="t" style="left:1159px;top:721px;font-size:14.5px;color:#444">AKS</div>
<div class="t b" style="left:1207px;top:721px;font-size:14.5px;color:#333">NHE</div>
<div class="t b" style="left:1156px;top:756px;font-size:14.5px;color:#333">NHE</div>
<div class="t b" style="left:1207px;top:756px;font-size:14.5px;color:#333">NHE</div>
<div class="t b" style="left:1156px;top:791px;font-size:14.5px;color:#333">NHE</div>
<div class="t w" style="left:1216px;top:791px;font-size:14.5px">PS</div>
<div class="t" style="left:1268px;top:791px;font-size:14.5px;color:#555">KB</div>
<div class="t w" style="left:1443px;top:791px;font-size:14.5px">PS</div>
<div class="t" style="left:352px;top:323.5px;clip-path:inset(9px 0 0 0)">øvrige felter</div>



</body></html>
